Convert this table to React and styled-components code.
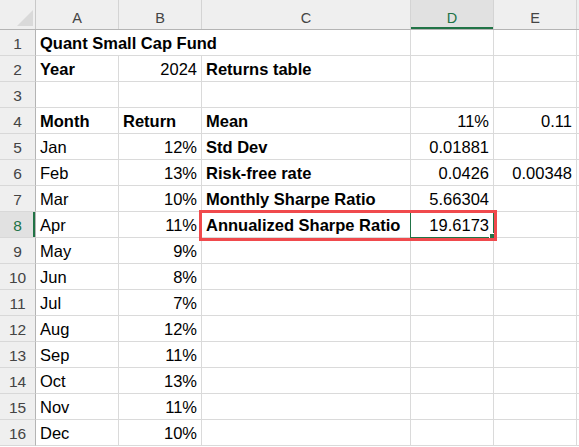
import React from 'react';
import styled, { createGlobalStyle, css } from 'styled-components';

const GlobalStyle = createGlobalStyle`
  html, body { margin: 0; padding: 0; background: #ffffff; }
  body { font-family: "Liberation Sans", Arial, sans-serif; }
  * { box-sizing: border-box; }
`;

const COLS = '36px 83px 83px 209px 83px 83px 1fr';
const GREEN = '#217346';
const GRID = '#dadada';

const Sheet = styled.div`
  position: relative;
  width: 579px;
  overflow: hidden;
`;

const HeaderRow = styled.div`
  display: grid;
  grid-template-columns: ${COLS};
  height: 30px;
  background: #efefef;
  border-bottom: 1px solid #b4b4b4;
`;

const Corner = styled.div`
  border-right: 1px solid #c8c8c8;
  svg { display: block; }
`;

const ColHead = styled.div`
  display: flex;
  justify-content: center;
  align-items: flex-start;
  padding-top: 10px;
  font-size: 14.5px;
  line-height: 16px;
  color: #444;
  border-right: 1px solid #d4d4d4;
  ${(p) =>
    p.$active &&
    css`
      background: #e1e1e1;
      color: ${GREEN};
      box-shadow: inset 0 -2px 0 ${GREEN};
    `}
`;

const Row = styled.div`
  display: grid;
  grid-template-columns: ${COLS};
  height: 26px;
`;

const RowHead = styled.div`
  display: flex;
  align-items: center;
  justify-content: center;
  padding-top: 2px;
  font-size: 15.5px;
  color: #444;
  background: #efefef;
  border-right: 1px solid #b4b4b4;
  border-bottom: 1px solid #d8d8d8;
  ${(p) =>
    p.$active &&
    css`
      background: #e1e1e1;
      color: ${GREEN};
      box-shadow: inset -2px 0 0 ${GREEN};
    `}
`;

const Cell = styled.div`
  display: flex;
  align-items: center;
  justify-content: ${(p) => (p.$right ? 'flex-end' : 'flex-start')};
  padding: 2px 4px 0 4px;
  font-size: 16.5px;
  font-weight: ${(p) => (p.$bold ? 700 : 400)};
  color: #000;
  white-space: nowrap;
  border-right: 1px solid ${GRID};
  border-bottom: 1px solid ${GRID};
  grid-column: span ${(p) => p.$span || 1};
`;

const Filler = styled.div`
  border-bottom: 1px solid ${GRID};
`;

const ActiveCell = styled.div`
  position: absolute;
  left: 410px;
  top: 211px;
  width: 84px;
  height: 27px;
  border: 1px solid ${GREEN};
  pointer-events: none;
  &::after {
    content: '';
    position: absolute;
    right: -3px;
    bottom: -3px;
    width: 5px;
    height: 5px;
    background: ${GREEN};
    border: 1px solid #fff;
  }
`;

const Highlight = styled.div`
  position: absolute;
  left: 199px;
  top: 210px;
  width: 298px;
  height: 31px;
  border: 3px solid #f04a4d;
  pointer-events: none;
`;

const rows = [
  [{ t: 'Quant Small Cap Fund', b: true, span: 3 }, {}, {}],
  [{ t: 'Year', b: true }, { t: '2024', r: true }, { t: 'Returns table', b: true }, {}, {}],
  [{}, {}, {}, {}, {}],
  [{ t: 'Month', b: true }, { t: 'Return', b: true }, { t: 'Mean', b: true }, { t: '11%', r: true }, { t: '0.11', r: true }],
  [{ t: 'Jan' }, { t: '12%', r: true }, { t: 'Std Dev', b: true }, { t: '0.01881', r: true }, {}],
  [{ t: 'Feb' }, { t: '13%', r: true }, { t: 'Risk-free rate', b: true }, { t: '0.0426', r: true }, { t: '0.00348', r: true }],
  [{ t: 'Mar' }, { t: '10%', r: true }, { t: 'Monthly Sharpe Ratio', b: true }, { t: '5.66304', r: true }, {}],
  [{ t: 'Apr' }, { t: '11%', r: true }, { t: 'Annualized Sharpe Ratio', b: true }, { t: '19.6173', r: true }, {}],
  [{ t: 'May' }, { t: '9%', r: true }, {}, {}, {}],
  [{ t: 'Jun' }, { t: '8%', r: true }, {}, {}, {}],
  [{ t: 'Jul' }, { t: '7%', r: true }, {}, {}, {}],
  [{ t: 'Aug' }, { t: '12%', r: true }, {}, {}, {}],
  [{ t: 'Sep' }, { t: '11%', r: true }, {}, {}, {}],
  [{ t: 'Oct' }, { t: '13%', r: true }, {}, {}, {}],
  [{ t: 'Nov' }, { t: '11%', r: true }, {}, {}, {}],
  [{ t: 'Dec' }, { t: '10%', r: true }, {}, {}, {}],
];

export default function App() {
  return (
    <>
      <GlobalStyle />
      <Sheet>
        <HeaderRow>
          <Corner>
            <svg width="35" height="29" viewBox="0 0 35 29">
              <polygon points="33,10 33,26 17,26" fill="#d9d9d9" />
            </svg>
          </Corner>
          {['A', 'B', 'C', 'D', 'E'].map((c) => (
            <ColHead key={c} $active={c === 'D'}>
              {c}
            </ColHead>
          ))}
          <div />
        </HeaderRow>
        {rows.map((cells, i) => (
          <Row key={i}>
            <RowHead $active={i === 7}>{i + 1}</RowHead>
            {cells.map((c, j) => (
              <Cell key={j} $bold={c.b} $right={c.r} $span={c.span}>
                {c.t}
              </Cell>
            ))}
            <Filler />
          </Row>
        ))}
        <ActiveCell />
        <Highlight />
      </Sheet>
    </>
  );
}
